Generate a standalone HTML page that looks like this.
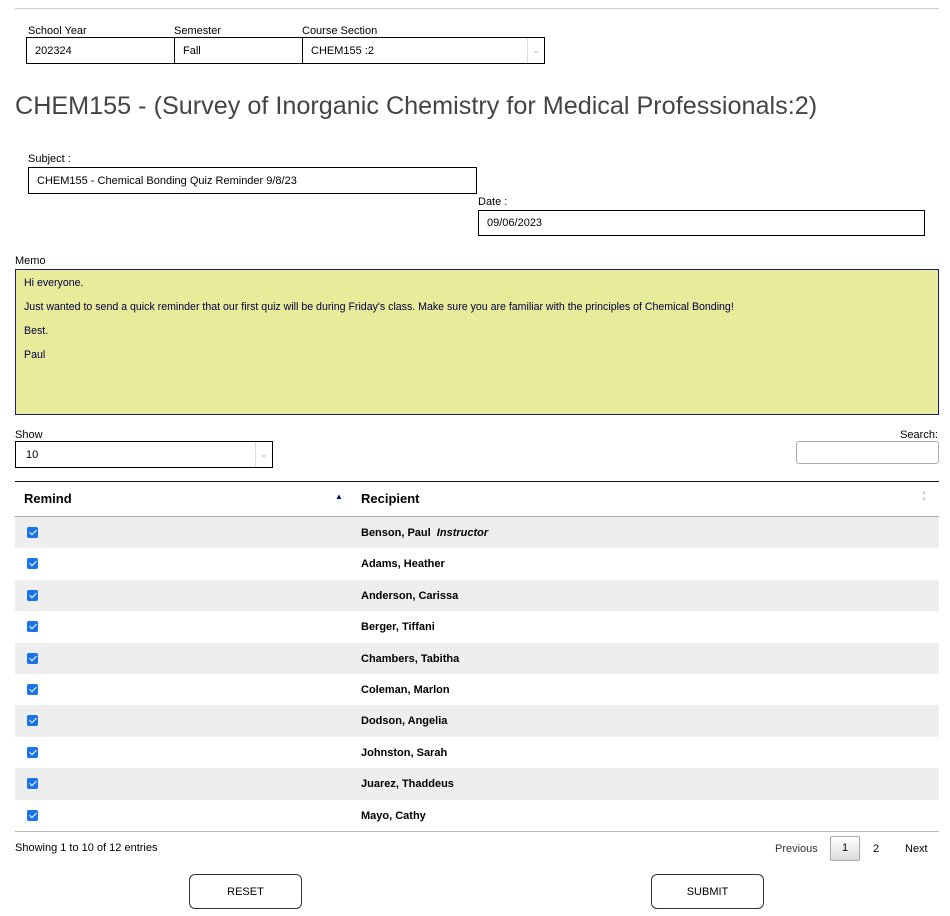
<!DOCTYPE html>
<html><head><meta charset="utf-8"><style>
body{margin:0;width:950px;height:916px;position:relative;font-family:"Liberation Sans",Arial,sans-serif;background:#fff;color:#000;overflow:hidden}
.a{position:absolute}
.lbl{font-size:11px;color:#000}
.box{position:absolute;border:1px solid #000;box-sizing:border-box;font-size:11px;padding-left:8px;display:flex;align-items:center;background:#fff}
.row{position:absolute;left:15px;width:924px;height:31.4px;font-size:11px;font-weight:bold}
.row.g{background:#eee}
.cb{position:absolute;left:12px;top:10px;width:11px;height:11px;background:#1a73e8;border-radius:2px}
.cb:after{content:"";position:absolute;left:3.5px;top:1px;width:3px;height:6px;border:solid #fff;border-width:0 1.6px 1.6px 0;transform:rotate(45deg)}
.nm{position:absolute;left:346px;top:10px}
.btn{position:absolute;border:1px solid #333;border-radius:6px;width:113px;height:35px;box-sizing:border-box;font-size:11px;display:flex;align-items:center;justify-content:center;background:#fff}
</style></head><body>
<div class="a" style="left:15px;top:8px;width:924px;height:1px;background:#ccc"></div>
<div class="a lbl" style="left:28px;top:25px">School Year</div>
<div class="a lbl" style="left:174px;top:25px">Semester</div>
<div class="a lbl" style="left:302px;top:25px">Course Section</div>
<div class="box" style="left:26px;top:37px;width:149px;height:27px">202324</div>
<div class="box" style="left:174px;top:37px;width:129px;height:27px">Fall</div>
<div class="box" style="left:302px;top:37px;width:243px;height:27px">CHEM155 :2<span class="a" style="right:0;top:0;width:16px;height:25px;border-left:1px solid #ddd;color:#aaa;font-size:8px;text-align:center;line-height:25px">&#8964;</span></div>
<div class="a" style="left:15px;top:92px;font-size:25.2px;color:#444">CHEM155 - (Survey of Inorganic Chemistry for Medical Professionals:2)</div>
<div class="a lbl" style="left:28px;top:153px">Subject :</div>
<div class="box" style="left:28px;top:167px;width:449px;height:27px">CHEM155 - Chemical Bonding Quiz Reminder 9/8/23</div>
<div class="a lbl" style="left:478px;top:196px">Date :</div>
<div class="box" style="left:478px;top:210px;width:447px;height:26px">09/06/2023</div>
<div class="a lbl" style="left:15px;top:255px">Memo</div>
<div class="a" style="left:15px;top:269px;width:924px;height:146px;box-sizing:border-box;border:1px solid #1a1a8c;background:#e8eb99;font-size:10.6px;color:#000040;padding:7px 8px;line-height:12px">
<div>Hi everyone.</div><div style="margin-top:12px">Just wanted to send a quick reminder that our first quiz will be during Friday's class. Make sure you are familiar with the principles of Chemical Bonding!</div><div style="margin-top:12px">Best.</div><div style="margin-top:12px">Paul</div></div>
<div class="a lbl" style="left:15px;top:429px">Show</div>
<div class="box" style="left:15px;top:441px;width:258px;height:27px;padding-left:10px">10<span class="a" style="right:0;top:0;width:16px;height:25px;border-left:1px solid #ddd;color:#aaa;font-size:8px;text-align:center;line-height:25px">&#8964;</span></div>
<div class="a lbl" style="right:12px;top:429px">Search:</div>
<div class="a" style="left:796px;top:441px;width:143px;height:23px;border:1px solid #aaa;border-radius:3px;box-sizing:border-box"></div>
<div class="a" style="left:15px;top:481px;width:924px;height:1px;background:#111"></div>
<div class="a" style="left:24px;top:491px;font-size:13px;font-weight:bold">Remind</div>
<div class="a" style="left:335px;top:492px;font-size:8px;color:#000080">&#9650;</div>
<div class="a" style="left:361px;top:491px;font-size:13px;font-weight:bold">Recipient</div>
<div class="a" style="left:921px;top:490px;font-size:6px;color:#ccc;line-height:7px">&#9650;<br>&#9660;</div>
<div class="a" style="left:15px;top:516px;width:924px;height:1px;background:#aaa"></div>
<div class="row g" style="top:517px"><div class="cb"></div><div class="nm">Benson, Paul &nbsp;<i>Instructor</i></div></div>
<div class="row" style="top:548.4px"><div class="cb"></div><div class="nm">Adams, Heather</div></div>
<div class="row g" style="top:579.8px"><div class="cb"></div><div class="nm">Anderson, Carissa</div></div>
<div class="row" style="top:611.2px"><div class="cb"></div><div class="nm">Berger, Tiffani</div></div>
<div class="row g" style="top:642.6px"><div class="cb"></div><div class="nm">Chambers, Tabitha</div></div>
<div class="row" style="top:674px"><div class="cb"></div><div class="nm">Coleman, Marlon</div></div>
<div class="row g" style="top:705.4px"><div class="cb"></div><div class="nm">Dodson, Angelia</div></div>
<div class="row" style="top:736.8px"><div class="cb"></div><div class="nm">Johnston, Sarah</div></div>
<div class="row g" style="top:768.2px"><div class="cb"></div><div class="nm">Juarez, Thaddeus</div></div>
<div class="row" style="top:799.6px"><div class="cb"></div><div class="nm">Mayo, Cathy</div></div>
<div class="a" style="left:15px;top:831px;width:924px;height:1px;background:#bbb"></div>
<div class="a lbl" style="left:15px;top:842px">Showing 1 to 10 of 12 entries</div>
<div class="a lbl" style="left:775px;top:843px;color:#333">Previous</div>
<div class="a" style="left:830px;top:836px;width:30px;height:25px;border:1px solid #aaa;border-radius:2px;background:linear-gradient(#fff,#ddd);box-sizing:border-box;font-size:11px;text-align:center;line-height:23px">1</div>
<div class="a lbl" style="left:873px;top:843px">2</div>
<div class="a lbl" style="left:905px;top:843px">Next</div>
<div class="btn" style="left:189px;top:874px">RESET</div>
<div class="btn" style="left:651px;top:874px">SUBMIT</div>
</body></html>
